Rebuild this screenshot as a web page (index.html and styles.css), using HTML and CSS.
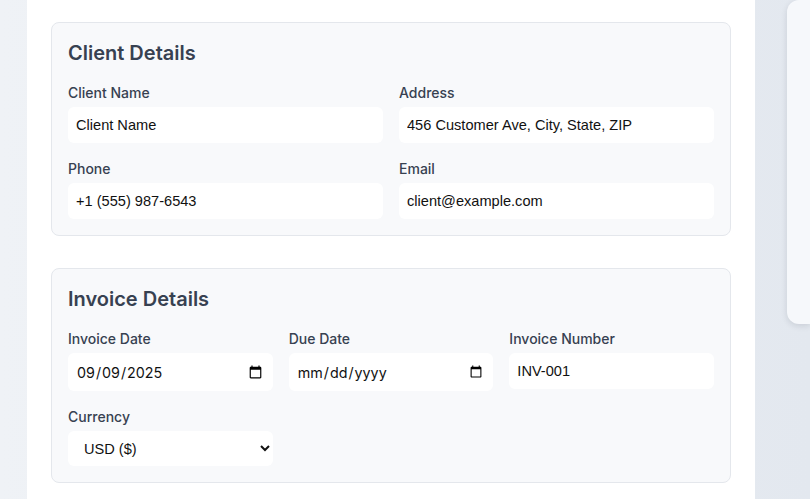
FILE: index.html
```html
<!DOCTYPE html>
<html lang="en">
<head>
<meta charset="utf-8">
<title>Invoice</title>
<link rel="stylesheet" href="styles.css">
</head>
<body>
<div class="layout">
  <main class="editor">
    <section class="card">
      <h2 class="card-title">Client Details</h2>
      <div class="grid grid-2">
        <label class="field">
          <span class="field-label">Client Name</span>
          <input class="input" type="text" value="Client Name">
        </label>
        <label class="field">
          <span class="field-label">Address</span>
          <input class="input" type="text" value="456 Customer Ave, City, State, ZIP">
        </label>
        <label class="field">
          <span class="field-label">Phone</span>
          <input class="input" type="text" value="+1 (555) 987-6543">
        </label>
        <label class="field">
          <span class="field-label">Email</span>
          <input class="input" type="email" value="client@example.com">
        </label>
      </div>
    </section>
    <section class="card">
      <h2 class="card-title">Invoice Details</h2>
      <div class="grid grid-3">
        <label class="field">
          <span class="field-label">Invoice Date</span>
          <input class="input input-date" type="date" value="2025-09-09">
        </label>
        <label class="field">
          <span class="field-label">Due Date</span>
          <input class="input input-date" type="date">
        </label>
        <label class="field">
          <span class="field-label">Invoice Number</span>
          <input class="input" type="text" value="INV-001">
        </label>
        <label class="field">
          <span class="field-label">Currency</span>
          <select class="input input-select">
            <option>USD ($)</option>
            <option>EUR (€)</option>
            <option>GBP (£)</option>
          </select>
        </label>
      </div>
    </section>
  </main>
  <aside class="preview"></aside>
</div>
</body>
</html>
```

FILE: styles.css
```css
* { box-sizing: border-box; }
html, body { margin: 0; padding: 0; }
body {
  font-family: Inter, "Noto Sans", sans-serif;
  background: linear-gradient(90deg, #eff2f6 0%, #e3e8ef 100%);
  height: 499px;
  overflow: hidden;
}
.layout {
  display: flex;
  align-items: flex-start;
  gap: 32px;
  padding-left: 27px;
  height: 100%;
}
.editor {
  width: 728px;
  flex: none;
  background: #ffffff;
  padding: 22px 24px;
  display: flex;
  flex-direction: column;
  gap: 32px;
  min-height: 100%;
}
.card {
  background: #f8f9fb;
  border: 1px solid #e4e7ec;
  border-radius: 8px;
  padding: 16px;
}
.card-title {
  margin: 0 0 16px;
  font-size: 20px;
  line-height: 28px;
  font-weight: 600;
  color: #374151;
}
.grid { display: grid; gap: 16px; }
.grid-2 { grid-template-columns: 1fr 1fr; }
.grid-3 { grid-template-columns: 1fr 1fr 1fr; }
.field { display: flex; flex-direction: column; gap: 4px; }
.field-label {
  font-size: 14px;
  line-height: 20px;
  font-weight: 500;
  color: #374151;
}
.input {
  height: 36px;
  border: none;
  border-radius: 6px;
  background: #ffffff;
  padding: 0 8px;
  font-family: "Liberation Sans", Arial, sans-serif;
  font-size: 14.6px;
  color: #111111;
  outline: none;
  width: 100%;
}
.input-date { height: 38px; font-family: Inter, sans-serif; font-size: 14.3px; }
.input-select { height: 35px; padding-left: 12px; }
.preview {
  flex: 1;
  height: 324px;
  background: #f6f8fb;
  border-radius: 12px 0 0 12px;
  box-shadow: 0 2px 6px rgba(15, 23, 42, 0.12);
}
```
